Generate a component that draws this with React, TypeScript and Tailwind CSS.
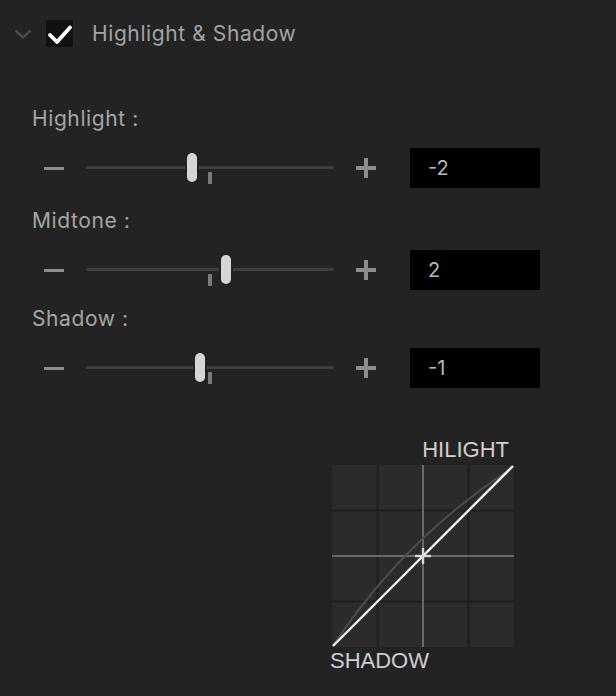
import React from "react";

type Adj = { label: string; value: number; thumb: number; gap: string };

const rows: Adj[] = [
  { label: "Highlight :", value: -2, thumb: 192, gap: "mt-[60px]" },
  { label: "Midtone :", value: 2, thumb: 226, gap: "mt-[21px]" },
  { label: "Shadow :", value: -1, thumb: 200, gap: "mt-[17px]" },
];

const TRACK_LEFT = 86;

function Slider({ thumb }: { thumb: number }) {
  return (
    <div className="relative w-[248px] h-[40px]">
      <div className="absolute left-0 right-0 top-[18px] h-[3px] rounded-full bg-[#3d3d3d]" />
      {/* zero mark */}
      <div className="absolute left-[122px] top-[24px] w-[4px] h-[12px] bg-[#7a7a7a]" />
      <div
        className="absolute top-[5px] w-[10px] h-[29px] rounded-full bg-[#d6d6d6] shadow-[0_0_0_2px_#232323]"
        style={{ left: thumb - TRACK_LEFT - 5 }}
      />
    </div>
  );
}

function Row({ row }: { row: Adj }) {
  return (
    <div className={row.gap}>
      <div className="pl-[32px] h-[24px] leading-[24px] text-[21px] tracking-[0.6px] text-[#a6a6a6]">
        {row.label}
      </div>
      <div className="mt-[17px] flex items-center pl-[44px]">
        <div className="w-[20px] h-[3px] bg-[#8e8e8e]" />
        <div className="ml-[22px]">
          <Slider thumb={row.thumb} />
        </div>
        <div className="ml-[22px] relative w-[20px] h-[20px]">
          <div className="absolute left-0 top-[8px] w-[20px] h-[4px] bg-[#8e8e8e]" />
          <div className="absolute left-[8px] top-0 w-[4px] h-[20px] bg-[#8e8e8e]" />
        </div>
        <div className="ml-[34px] w-[130px] h-[40px] bg-black flex items-center pl-[18px] text-[20px] text-[#b9b9b9]">
          {row.value}
        </div>
      </div>
    </div>
  );
}

function Curve() {
  // box is 182 x 182, origin at top-left
  const s = 182;
  const q = s / 4;
  const c = 2 * q;
  return (
    <svg width={s} height={s} viewBox={`0 0 ${s} ${s}`} className="block">
      <rect x="0" y="0" width={s} height={s} fill="#2b2b2b" />
      {[q, 3 * q].map((v) => (
        <g key={v}>
          <line x1={v} y1="0" x2={v} y2={s} stroke="#1f1f1f" strokeWidth="2" />
          <line x1="0" y1={v} x2={s} y2={v} stroke="#1f1f1f" strokeWidth="2" />
        </g>
      ))}
      <line x1={c} y1="0" x2={c} y2={s} stroke="#686868" strokeWidth="2" />
      <line x1="0" y1={c} x2={s} y2={c} stroke="#686868" strokeWidth="2" />
      <path d={`M1 ${s - 1} Q 70 76 177 5`} fill="none" stroke="#4c4c4c" strokeWidth="2" />
      <path d={`M1 ${s - 1} L ${s - 1} 1`} fill="none" stroke="#f2f2f2" strokeWidth="2.4" />
      <line x1={c - 8} y1={c} x2={c + 8} y2={c} stroke="#d8d8d8" strokeWidth="2.4" />
      <line x1={c} y1={c - 8} x2={c} y2={c + 8} stroke="#d8d8d8" strokeWidth="2.4" />
    </svg>
  );
}

export default function App() {
  return (
    <div className="w-[616px] h-[696px] overflow-hidden bg-[#232323] font-['Inter',sans-serif]">
      {/* header */}
      <div className="flex items-center pt-[20px] pl-[14px] h-[47px]">
        <svg width="18" height="10" viewBox="0 0 18 10" className="mt-[1px]">
          <path d="M1.5 1.5 L9 8.5 L16.5 1.5" fill="none" stroke="#4b4b4b" strokeWidth="2.4" />
        </svg>
        <div className="ml-[14px] w-[27px] h-[27px] bg-[#111111] flex items-center justify-center">
          <svg width="27" height="27" viewBox="0 0 27 27">
            <path d="M4 15 L11 22 L24 7.5" fill="none" stroke="#ffffff" strokeWidth="3.8" strokeLinecap="round" strokeLinejoin="round" />
          </svg>
        </div>
        <div className="ml-[19px] text-[21px] leading-[24px] tracking-[0.6px] text-[#a3a3a3]">
          Highlight &amp; Shadow
        </div>
      </div>

      {rows.map((r) => (
        <Row key={r.label} row={r} />
      ))}

      {/* curve preview */}
      <div className="mt-[49px] pl-[332px]">
        <div className="w-[182px] text-right pr-[5px] text-[22px] leading-[26px] text-[#cfcfcf] font-['Liberation_Sans',sans-serif]">
          HILIGHT
        </div>
        <div className="mt-[2px]">
          <Curve />
        </div>
        <div className="-ml-[2px] mt-[1px] text-[22px] leading-[26px] text-[#cfcfcf] font-['Liberation_Sans',sans-serif]">
          SHADOW
        </div>
      </div>
    </div>
  );
}
